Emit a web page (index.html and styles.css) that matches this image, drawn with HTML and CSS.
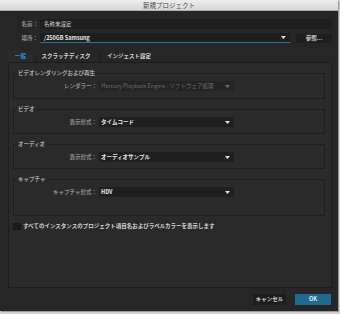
FILE: index.html
```html
<!DOCTYPE html>
<html lang="ja">
<head>
<meta charset="utf-8">
<link rel="stylesheet" href="styles.css">
</head>
<body>
<div class="window">
  <div class="titlebar">新規プロジェクト</div>
  <div class="content">
    <div class="row name-row">
      <span class="lbl">名前：</span>
      <div class="field">名称未設定</div>
    </div>
    <div class="row loc-row">
      <span class="lbl">場所：</span>
      <div class="field select loc">
        <span>/250GB Samsung</span>
        <svg class="arrow" width="5" height="3" viewBox="0 0 5 3"><polygon points="0,0 5,0 2.5,3" fill="#e0e0e0"/></svg>
      </div>
      <div class="btn browse">参照...</div>
    </div>
    <div class="tabs">
      <div class="tab active">一般</div>
      <div class="tab">スクラッチディスク</div>
      <div class="tab">インジェスト設定</div>
    </div>
    <div class="panel">
      <fieldset class="group">
        <legend>ビデオレンダリングおよび再生</legend>
        <div class="prop">
          <span class="plbl">レンダラー：</span>
          <div class="dd disabled"><span>Mercury Playback Engine - ソフトウェア処理</span><svg class="arrow" width="5" height="3" viewBox="0 0 5 3"><polygon points="0,0 5,0 2.5,3" fill="#6a6a6a"/></svg></div>
        </div>
      </fieldset>
      <fieldset class="group">
        <legend>ビデオ</legend>
        <div class="prop">
          <span class="plbl">表示形式：</span>
          <div class="dd"><span>タイムコード</span><svg class="arrow" width="5" height="3" viewBox="0 0 5 3"><polygon points="0,0 5,0 2.5,3" fill="#e0e0e0"/></svg></div>
        </div>
      </fieldset>
      <fieldset class="group">
        <legend>オーディオ</legend>
        <div class="prop">
          <span class="plbl">表示形式：</span>
          <div class="dd"><span>オーディオサンプル</span><svg class="arrow" width="5" height="3" viewBox="0 0 5 3"><polygon points="0,0 5,0 2.5,3" fill="#e0e0e0"/></svg></div>
        </div>
      </fieldset>
      <fieldset class="group tall">
        <legend>キャプチャ</legend>
        <div class="prop">
          <span class="plbl">キャプチャ形式：</span>
          <div class="dd"><span>HDV</span><svg class="arrow" width="5" height="3" viewBox="0 0 5 3"><polygon points="0,0 5,0 2.5,3" fill="#e0e0e0"/></svg></div>
        </div>
      </fieldset>
      <label class="check">
        <span class="box"></span>
        <span>すべてのインスタンスのプロジェクト項目名およびラベルカラーを表示します</span>
      </label>
    </div>
    <div class="buttons">
      <div class="btn cancel">キャンセル</div>
      <div class="btn ok">OK</div>
    </div>
  </div>
</div>
</body>
</html>
```
FILE: styles.css
```css
* { box-sizing: border-box; }
html, body {
  margin: 0;
  padding: 0;
  background: #cfcfcf;
  width: 340px;
  height: 314px;
  overflow: hidden;
}
body {
  font-family: "Noto Sans CJK JP", "Noto Sans", sans-serif;
  font-size: 5.5px;
  color: #9c9c9c;
}
.window {
  width: 338px;
  height: 311px;
  background: #262626;
  display: flex;
  flex-direction: column;
  box-shadow: 1px 1px 0 #9a9a9a;
}
.titlebar {
  height: 11px;
  line-height: 11px;
  text-align: center;
  font-size: 6.5px;
  color: #4a4a4a;
  background: linear-gradient(#eeeeee, #d8d8d8);
  border-bottom: 1px solid #b0b0b0;
}
.content {
  padding: 8px 6px 0 8px;
  display: flex;
  flex-direction: column;
  flex: 1;
}
.row {
  display: flex;
  align-items: center;
}
.lbl {
  width: 32px;
  text-align: right;
  padding-right: 2px;
  color: #8e8e8e;
  line-height: 10px;
  font-weight: 700;
}
.field {
  height: 10px;
  line-height: 10px;
  background: #1e1e1e;
  color: #d8d8d8;
  padding-left: 4px;
  flex: 1;
}
.loc-row { margin-top: 4px; }
.field.loc {
  flex: 0 0 250px;
  height: 10px;
  font-weight: 700;
  color: #e8e8e8;
  border-bottom: 1px solid #2a7496;
  display: flex;
  align-items: center;
  justify-content: space-between;
  padding-right: 4px;
}
.arrow { display: block; flex: none; }
.btn {
  height: 10px;
  line-height: 10px;
  text-align: center;
  background: #1e1e1e;
  color: #d0d0d0;
  font-weight: 700;
}
.browse {
  margin-left: 6px;
  width: 36px;
  height: 9px;
  line-height: 9px;
}
.tabs {
  display: flex;
  margin-top: 8px;
  height: 11px;
}
.tab {
  line-height: 11px;
  font-weight: 700;
  color: #d6d6d6;
  text-align: center;
  border-right: 1px solid #1c1c1c;
}
.tab.active {
  width: 25px;
  background: #2a2a2a;
  color: #2f8fd8;
  border-right: none;
}
.tab:nth-child(2) { width: 67px; }
.tab:nth-child(3) { width: 58px; border-right: none; }
.panel {
  width: 324px;
  height: 226px;
  background: #2a2a2a;
  border: 1px solid #1d1d1d;
  padding: 6px 6px 0 4px;
  display: flex;
  flex-direction: column;
}
.group {
  margin: 0 0 6px 0;
  padding: 4px 0 6px 0;
  border: 1px solid #1e1e1e;
  min-width: 0;
}
.group:first-child { padding-bottom: 7px; }
.group.tall { padding-bottom: 18px; margin-bottom: 6px; }
legend {
  font-size: 5.5px;
  line-height: 8px;
  padding: 0 2px;
  margin-left: 2px;
  color: #a6a6a6;
  font-weight: 700;
}
.prop {
  display: flex;
  align-items: center;
}
.plbl {
  width: 85px;
  text-align: right;
  padding-right: 2px;
  color: #8c8c8c;
  font-weight: 700;
}
.dd {
  width: 135px;
  height: 10px;
  background: #1f1f1f;
  display: flex;
  align-items: center;
  justify-content: space-between;
  padding: 0 4px 0 2px;
  color: #e8e8e8;
  font-weight: 700;
}
.dd.disabled {
  background: #242424;
  color: #6a6a6a;
  font-weight: 400;
}
.check {
  display: flex;
  align-items: center;
  color: #d4d4d4;
  font-weight: 700;
}
.box {
  width: 8px;
  height: 7px;
  background: #1c1c1c;
  border: 1px solid #171717;
  margin-right: 2px;
}
.buttons {
  display: flex;
  justify-content: flex-end;
  margin-top: 6px;
  padding-right: 1px;
}
.cancel {
  width: 33px;
  height: 11px;
  line-height: 11px;
  background: #1d1d1d;
  margin-right: 9px;
}
.ok {
  width: 36px;
  height: 11px;
  line-height: 11px;
  background: #1e6b8f;
  color: #e6eef2;
}
```
